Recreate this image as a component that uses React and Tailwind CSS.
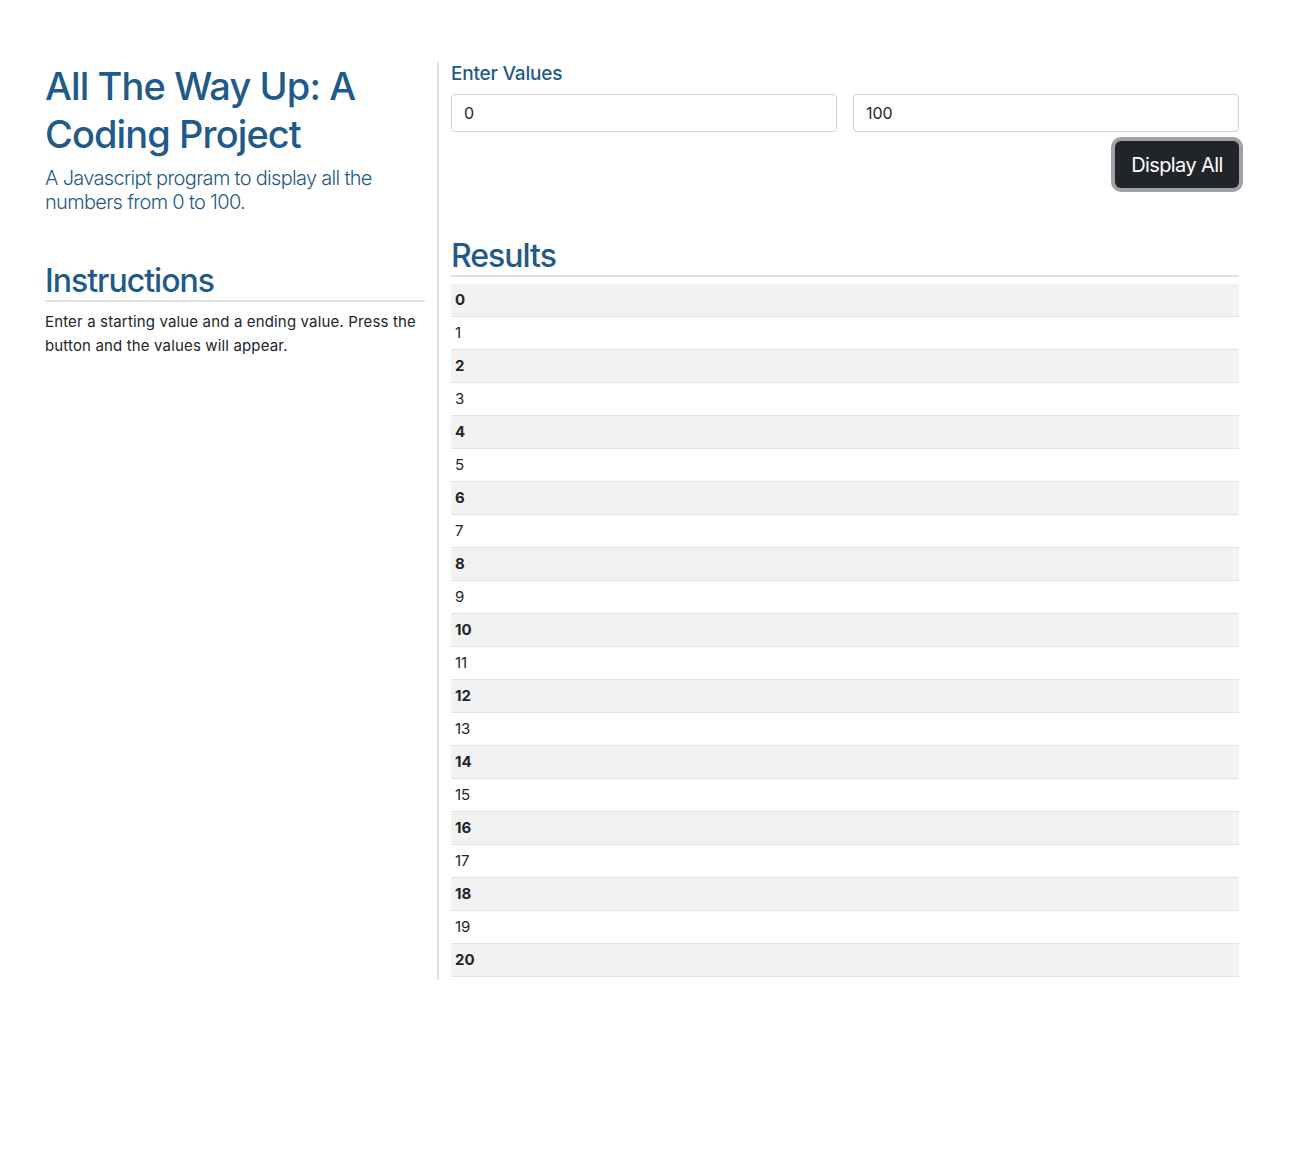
const rows = Array.from({ length: 21 }, (_, i) => i);

export default function App() {
  return (
    <div className="min-h-[1160px] bg-white font-['Inter','Liberation_Sans',sans-serif] text-[#212529]">
      <div className="flex items-start pt-[62px] pl-[45px]">
        {/* left column */}
        <div className="w-[380px]">
          <h1 className="text-[38px] leading-[48px] font-medium text-[#1f5a8b] tracking-[-0.9px]">
            All The Way Up: A Coding Project
          </h1>
          <p className="mt-[8px] text-[20px] leading-[24px] text-[#1f5a8b] font-light tracking-[-0.7px]">
            A Javascript program to display all the numbers from 0 to 100.
          </p>
          <h2 className="mt-[48px] text-[32px] leading-[38px] font-medium text-[#1f5a8b] tracking-[-1px] border-b-2 border-[#dee2e6]">
            Instructions
          </h2>
          <p className="mt-[8px] text-[15px] leading-[24px] tracking-[0.15px]">
            Enter a starting value and a ending value. Press the button and the values will appear.
          </p>
        </div>

        {/* right column */}
        <div className="ml-[12px] border-l-2 border-[#dee2e6] pl-[12px] pb-[3px]">
          <div className="w-[788px]">
            <label className="block text-[19px] leading-[24px] font-medium text-[#1f5a8b] tracking-[-0.2px]">Enter Values</label>
            <div className="mt-[8px] grid grid-cols-2 gap-[16px]">
              <input
                defaultValue="0"
                className="h-[38px] rounded-[4px] border border-[#ced4da] px-[12px] text-[16px] outline-none"
              />
              <input
                defaultValue="100"
                className="h-[38px] rounded-[4px] border border-[#ced4da] px-[12px] text-[16px] outline-none"
              />
            </div>
            <div className="mt-[9px] flex justify-end">
              <button className="h-[47px] w-[124px] rounded-[6px] bg-[#212529] text-[20px] text-white tracking-[-0.6px] ring-4 ring-[#a0a2a5]">
                Display All
              </button>
            </div>

            <h2 className="mt-[49px] text-[32px] leading-[38px] font-medium text-[#1f5a8b] tracking-[-1px] border-b-2 border-[#dee2e6]">
              Results
            </h2>
            <table className="mt-[7px] w-full border-collapse text-[15px]">
              <tbody>
                {rows.map((n) => (
                  <tr
                    key={n}
                    className={n % 2 === 0 ? "bg-[#f2f2f2] font-bold border-b border-[#dee2e6]" : "bg-white border-b border-[#dee2e6]"}
                  >
                    <td className="px-[4px] py-[4px] leading-[24px]">{n}</td>
                  </tr>
                ))}
              </tbody>
            </table>
          </div>
        </div>
      </div>
    </div>
  );
}
